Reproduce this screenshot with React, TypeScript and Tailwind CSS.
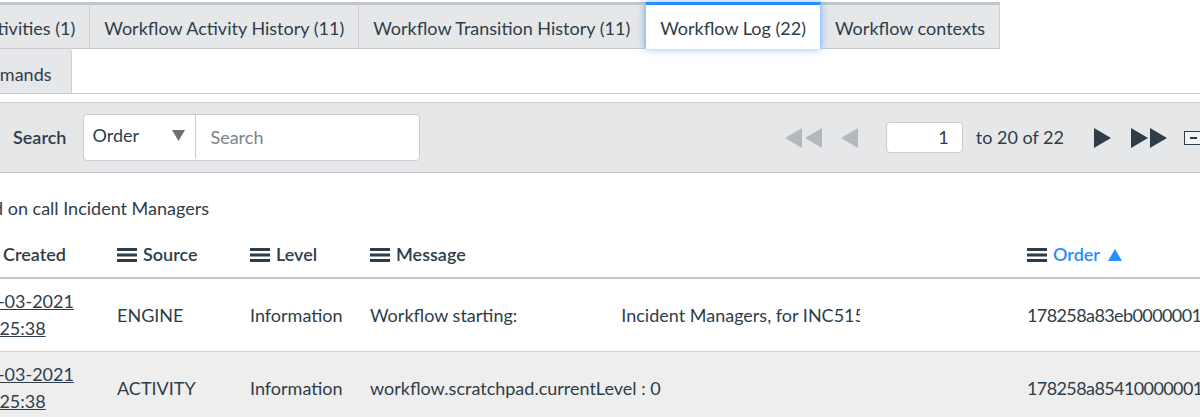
import React from 'react'

const Bars = () => (
  <svg width="20" height="16" viewBox="0 0 20 16" className="shrink-0">
    <rect x="0" y="1" width="20" height="3" fill="#2e3d49" />
    <rect x="0" y="6.5" width="20" height="3" fill="#2e3d49" />
    <rect x="0" y="12" width="20" height="3" fill="#2e3d49" />
  </svg>
)

const Tri = ({ dir, color }: { dir: 'l' | 'r'; color: string }) => (
  <svg width="17" height="20" viewBox="0 0 17 20">
    {dir === 'l' ? <polygon points="17,0 17,20 0,10" fill={color} /> : <polygon points="0,0 0,20 17,10" fill={color} />}
  </svg>
)

const tabs = [
  { label: 'Workflow Activities (1)', active: false },
  { label: 'Workflow Activity History (11)', active: false },
  { label: 'Workflow Transition History (11)', active: false },
  { label: 'Workflow Log (22)', active: true },
  { label: 'Workflow contexts', active: false },
]

const rows = [
  {
    day: '04-03-2021',
    time: '10:25:38',
    source: 'ENGINE',
    level: 'Information',
    msg: 'Workflow starting:',
    msg2: 'Incident Managers, for INC5150131',
    order: '178258a83eb00000010',
  },
  {
    day: '04-03-2021',
    time: '10:25:38',
    source: 'ACTIVITY',
    level: 'Information',
    msg: 'workflow.scratchpad.currentLevel : 0',
    msg2: '',
    order: '178258a854100000010',
  },
]

export default function App() {
  return (
    <div className="w-[1200px] h-[417px] overflow-hidden bg-white text-[18px] text-[#2e3d49] font-['Source_Sans_Pro','Lato',sans-serif]">
      {/* tabs row 1 */}
      <div className="pt-[2px] flex -ml-[119px]">
        {tabs.map((t) => (
          <div
            key={t.label}
            className={
              t.active
                ? 'h-[47px] px-[14px] pt-[3px] flex items-center bg-white border-t-[3px] border-[#278efc] border-x border-x-[#9cc8f5] shadow-[0_0_8px_rgba(39,142,252,0.55)] relative z-10 whitespace-nowrap'
                : 'h-[47px] px-[14px] pt-[3px] flex items-center bg-[#e6e7e9] border-t-[3px] border-t-[#c3c6ca] border-r border-r-[#cfd1d4] border-b border-b-[#c7c9cc] whitespace-nowrap'
            }
          >
            {t.label}
          </div>
        ))}
      </div>
      {/* tabs row 2 */}
      <div className="flex border-b border-[#c7c9cc]">
        <div className="h-[44px] -ml-[51px] pl-[14px] pr-[19px] pt-[6px] flex items-center bg-[#e6e7e9] border-r border-[#cfd1d4] rounded-tr-[3px] whitespace-nowrap">
          Commands
        </div>
      </div>

      {/* search bar */}
      <div className="mt-[8px] h-[71px] bg-[#e6e7e9] border-y border-[#c9cbce] flex items-center">
        <span className="ml-[13px] font-semibold">Search</span>
        <div className="ml-[17px] flex h-[47px] bg-white border border-[#c9cbce] rounded-[4px]">
          <div className="w-[112px] flex items-center pl-[8px] pr-[10px] justify-between border-r border-[#c9cbce] -translate-y-[2px]">
            <span>Order</span>
            <svg width="13" height="11" viewBox="0 0 13 11">
              <polygon points="0,0 13,0 6.5,11" fill="#6b7177" />
            </svg>
          </div>
          <div className="w-[223px] flex items-center pl-[14px] text-[#7c838a]">Search</div>
        </div>
        <div className="ml-auto -mr-[2px] flex items-center">
          <div className="flex gap-[3px]">
            <Tri dir="l" color="#b3b8bd" />
            <Tri dir="l" color="#b3b8bd" />
          </div>
          <div className="ml-[19px]">
            <Tri dir="l" color="#b3b8bd" />
          </div>
          <div className="ml-[28px] w-[77px] h-[31px] bg-white border border-[#c9cbce] rounded-[4px] flex items-center justify-end pr-[13px]">
            1
          </div>
          <span className="ml-[13px]">to 20 of 22</span>
          <div className="ml-[30px]">
            <Tri dir="r" color="#2e3d49" />
          </div>
          <div className="ml-[20px] flex gap-[2px]">
            <Tri dir="r" color="#2e3d49" />
            <Tri dir="r" color="#2e3d49" />
          </div>
          <div className="ml-[17px] w-[18px] h-[14px] border border-[#2e3d49] bg-[#f4f4f4] flex items-center justify-center">
            <div className="w-[7px] h-[2px] bg-[#2e3d49]" />
          </div>
        </div>
      </div>

      {/* breadcrumb */}
      <div className="mt-[22px] -ml-[68px] whitespace-nowrap">Assigned on call Incident Managers</div>

      {/* table */}
      <div className="mt-[12px] -ml-[23px]">
        <div className="grid grid-cols-[140px_133px_120px_657px_1fr] h-[45px] items-center border-b-2 border-[#c4c6c9] font-semibold">
          <div className="flex items-center gap-[6px] -translate-y-px">
            <Bars />
            Created
          </div>
          <div className="flex items-center gap-[6px] -translate-y-px">
            <Bars />
            Source
          </div>
          <div className="flex items-center gap-[6px] -translate-y-px">
            <Bars />
            Level
          </div>
          <div className="flex items-center gap-[6px] -translate-y-px">
            <Bars />
            Message
          </div>
          <div className="flex items-center gap-[6px] whitespace-nowrap -translate-y-px">
            <Bars />
            <span className="text-[#278efc]">Order</span>
            <svg width="14" height="12" viewBox="0 0 14 12" className="ml-[2px]">
              <polygon points="7,0 14,12 0,12" fill="#278efc" />
            </svg>
          </div>
        </div>
        {rows.map((r, i) => (
          <div
            key={i}
            className={`grid grid-cols-[140px_133px_120px_657px_1fr] h-[73px] items-center border-b border-[#cfd0d2] ${
              i % 2 === 1 ? 'bg-[#eeeeee]' : 'bg-white'
            }`}
          >
            <div className="leading-[27px] underline flex flex-col items-start">
              <span>{r.day}</span>
              <span className="-ml-[3px]">{r.time}</span>
            </div>
            <div>{r.source}</div>
            <div>{r.level}</div>
            <div className="w-[490px] overflow-hidden whitespace-nowrap flex">
              <span>{r.msg}</span>
              {r.msg2 && <span className="ml-[104px]">{r.msg2}</span>}
            </div>
            <div className="whitespace-nowrap tracking-[-0.6px]">{r.order}</div>
          </div>
        ))}
      </div>
    </div>
  )
}
